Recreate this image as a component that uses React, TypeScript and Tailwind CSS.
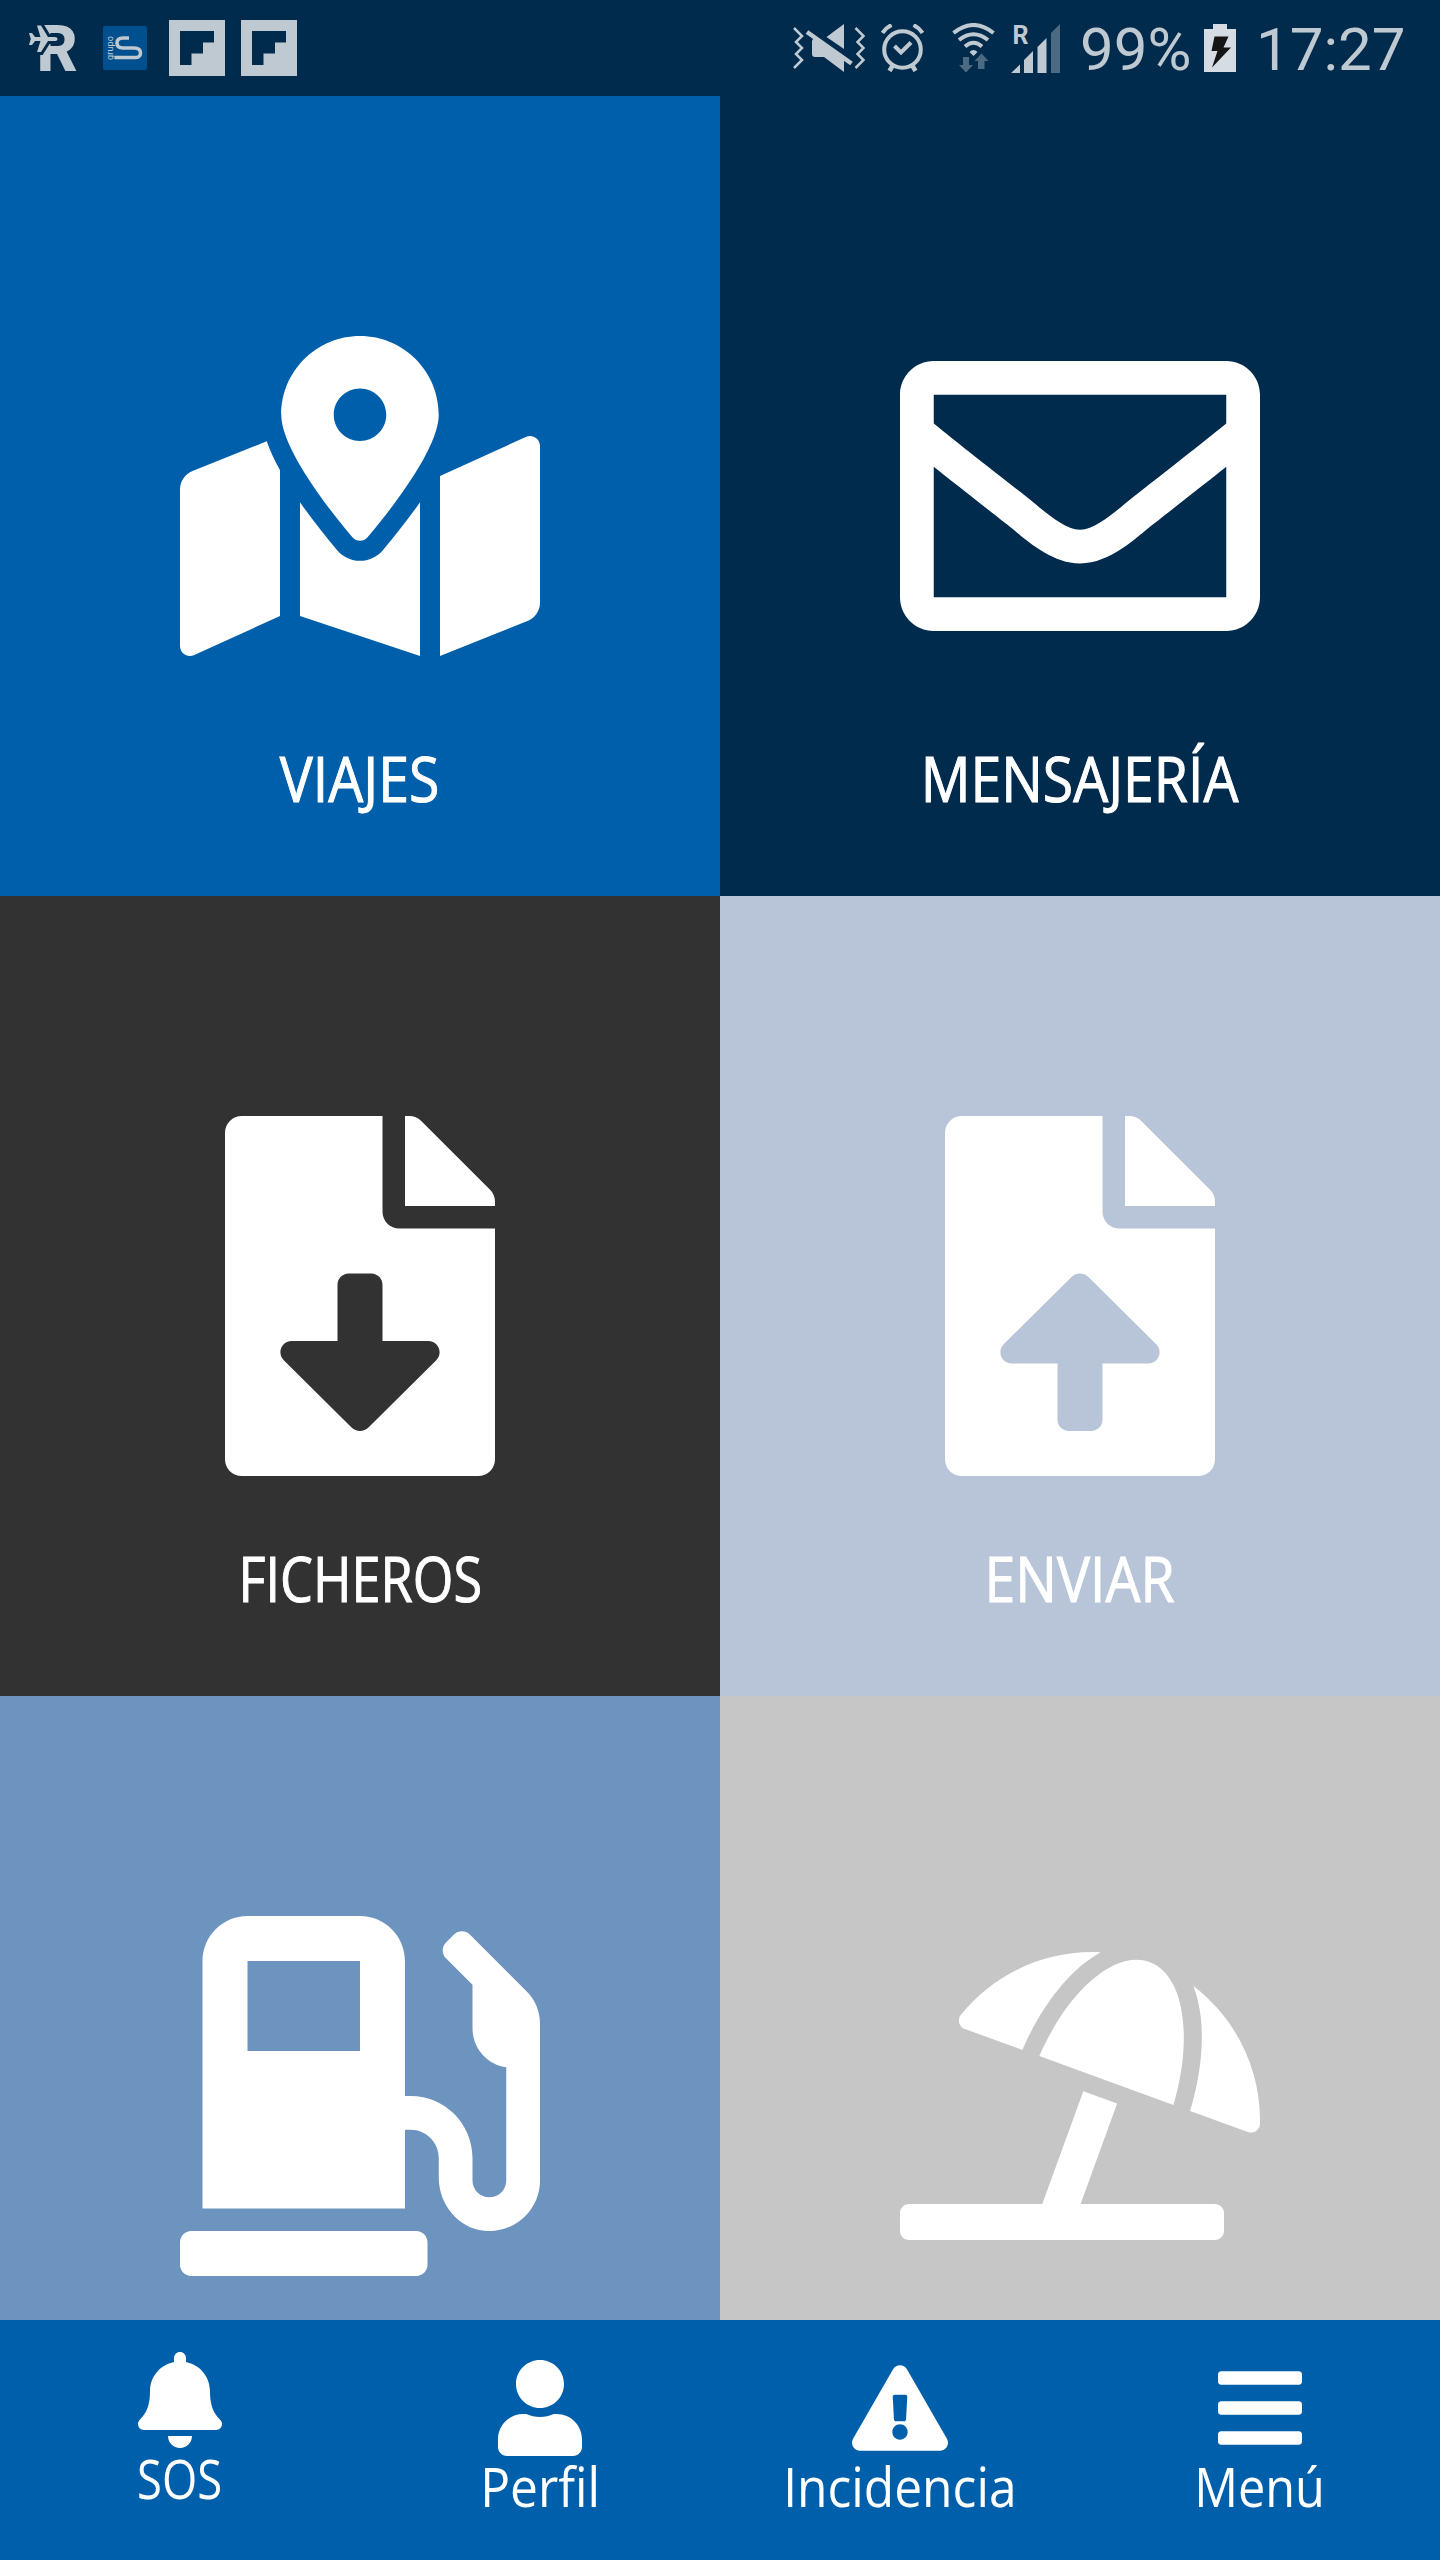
import React from 'react';
import type { IconType } from 'react-icons';
import {
  FaBars,
  FaBell,
  FaExclamationTriangle,
  FaFileDownload,
  FaFileUpload,
  FaGasPump,
  FaMapMarkedAlt,
  FaRegEnvelope,
  FaUmbrellaBeach,
  FaUser,
} from 'react-icons/fa';

interface Tile {
  label?: string;
  icon: IconType;
  bg: string;
  stretch?: string;
}

const tiles: Tile[] = [
  { label: 'VIAJES', icon: FaMapMarkedAlt, bg: 'bg-[#005fab]', stretch: 'scale-x-[0.9]' },
  { label: 'MENSAJERÍA', icon: FaRegEnvelope, bg: 'bg-[#002b4d]', stretch: 'scale-x-[0.9]' },
  { label: 'FICHEROS', icon: FaFileDownload, bg: 'bg-[#323232]', stretch: 'scale-x-[0.85]' },
  { label: 'ENVIAR', icon: FaFileUpload, bg: 'bg-[#b8c5d9]', stretch: 'scale-x-[0.9]' },
  { icon: FaGasPump, bg: 'bg-[#6d93bf]' },
  { icon: FaUmbrellaBeach, bg: 'bg-[#c6c6c6]' },
];

const navItems = [
  { label: 'SOS', icon: FaBell, pad: 'pt-8', stretch: 'scale-x-[0.84]' },
  { label: 'Perfil', icon: FaUser, pad: 'pt-10', stretch: 'scale-x-[0.92]' },
  { label: 'Incidencia', icon: FaExclamationTriangle, pad: 'pt-10', stretch: 'scale-x-[0.92]' },
  { label: 'Menú', icon: FaBars, pad: 'pt-10', stretch: 'scale-x-[0.9]' },
];

const PlaneLogo = () => (
  <svg viewBox="18 4 68 88" className="-mx-2.5 h-[88px] w-[68px]">
    <text x="36.5" y="71" fontSize="64" fontWeight="800" fontFamily="Roboto, sans-serif" fill="currentColor">R</text>
    <path
      d="M57.5 39q0-2-3-2h-6.5L41 25.500h-4L40.500 37H35l-3-4h-3l1.800 6-1.800 6h3l3-4h5.500L37 52h4l7-11h6.500q3 0 3-2z"
      fill="currentColor"
      stroke="#002b4d"
      strokeWidth="6"
      paintOrder="stroke"
    />
  </svg>
);

const GrupoLogo = () => (
  <svg viewBox="0 0 44 44" className="h-11 w-11">
    <rect width="44" height="44" rx="2" fill="#004f8f" />
    <path d="M26 12H20Q14 12 14 17T20 22H31Q37.500 22 37.500 27T31 31.500H12" fill="none" stroke="currentColor" strokeWidth="3.500" />
    <text transform="translate(9.500 34) rotate(-90)" fontSize="9" textLength="24" fontFamily="Roboto, sans-serif" fill="currentColor">grupo</text>
  </svg>
);

const FlipLogo = () => (
  <svg viewBox="0 0 56 56" className="h-14 w-14">
    <path d="M0 0H56V56H0zM11 11V45H22.500V33.500H34V22.500H45V11z" fill="currentColor" fillRule="evenodd" />
  </svg>
);

const MutedIcon = () => (
  <svg viewBox="793 24 72 48" className="h-12 w-[72px]" fill="none">
    <path d="M794 28l8 8-6 6 6 6-6 6 6 6-8 8M855.500 28l8 8-6 6 6 6-6 6 6 6-8 8" stroke="currentColor" strokeWidth="2.500" />
    <path d="M826.500 37L844 24V49zM814 37L844 58V72L824 57H815Q812 57 812 54V41z" fill="currentColor" />
    <path d="M807 32L851.500 63.500" stroke="currentColor" strokeWidth="4.500" />
  </svg>
);

const AlarmIcon = () => (
  <svg viewBox="881 24 43 48" className="h-12 w-[43px]" fill="none" stroke="currentColor">
    <circle cx="902.500" cy="49.500" r="18.300" strokeWidth="4" />
    <path d="M894.500 46l6.500 6.500L911 42.500" strokeWidth="4" />
    <path d="M882.500 33q3-5 9-8M922.500 33q-3-5-9-8" strokeWidth="4" />
    <path d="M893 65l-3.500 6M912 65l3.500 6" strokeWidth="4.500" />
  </svg>
);

const WifiIcon = () => (
  <svg viewBox="952 23 44 50" className="h-[50px] w-11" fill="none">
    <path d="M953.500 33Q973.500 17 993.500 33M959 40Q973.500 28.500 988 40M965 46.500Q973.500 39 982 46.500" stroke="currentColor" strokeWidth="4" />
    <path d="M969.500 52q4-4 8 0l-4 4z" fill="currentColor" />
    <path d="M963 57h6v8h4l-7 7.500-7-7.500h4zM978 69h6.500v-8h4l-7-7.500-7 7.500h3.500z" fill="#4d6a83" />
  </svg>
);

const SignalIcon = () => (
  <svg viewBox="1010 13 51 69" className="h-[69px] w-[51px]" fill="currentColor">
    <text x="1012.500" y="43" fontSize="25" fontWeight="700" fontFamily="Roboto, sans-serif">R</text>
    <path d="M1011 72l9-8.500V72zM1024 72V59l9-9v22zM1037.500 72V46l9-9v35z" />
    <path d="M1051 72V32l9-9v49z" fill="#4d6a83" />
  </svg>
);

const BatteryIcon = () => (
  <svg viewBox="1204 24 32 48" className="h-12 w-8">
    <path d="M1204 29h9v-5h14v5h9v43h-32z" fill="#d5dce3" />
    <path d="M1214.500 36.500h14l-5 11h7.500L1212 67.500l5.500-16.500h-6z" fill="#151515" />
  </svg>
);

const StatusBar = () => (
  <header className="flex h-24 items-center bg-[#002b4d] pl-7 pr-[35px] text-[#bfc9d1]">
    <PlaneLogo />
    <div className="ml-[27px]"><GrupoLogo /></div>
    <div className="ml-[22px] flex gap-4">
      <FlipLogo />
      <FlipLogo />
    </div>
    <div className="ml-auto flex items-center font-[Roboto,sans-serif] text-[60px] leading-[96px]">
      <MutedIcon />
      <div className="ml-4"><AlarmIcon /></div>
      <div className="ml-7"><WifiIcon /></div>
      <div className="ml-3.5"><SignalIcon /></div>
      <span className="ml-[19px] w-[113px] whitespace-nowrap pt-[3px]">99%</span>
      <div className="ml-[11px]"><BatteryIcon /></div>
      <span className="ml-5 w-[149px] whitespace-nowrap pt-[3px]">17:27</span>
    </div>
  </header>
);

export default function App() {
  return (
    <div className="flex h-[2560px] w-[1440px] flex-col overflow-hidden font-['Open_Sans','Noto_Sans',sans-serif] text-white">
      <StatusBar />

      <main className="grid grid-cols-2 grid-rows-[800px_800px_624px]">
        {tiles.map(({ label, icon: Icon, bg, stretch }, idx) => (
          <section key={idx} className={`flex flex-col items-center pt-[220px] ${bg}`}>
            <Icon className="h-[360px] w-[360px] shrink-0" />
            {label && (
              <span className={`mt-[62px] text-[61.5px] leading-[80px] [-webkit-text-stroke:1px_white] ${stretch}`}>{label}</span>
            )}
          </section>
        ))}
      </main>

      <nav className="grid h-60 grid-cols-4 bg-[#005fab]">
        {navItems.map(({ label, icon: Icon, pad, stretch }) => (
          <button key={label} className={`flex flex-col items-center ${pad}`}>
            <Icon className="h-24 w-24 shrink-0" />
            <span className={`text-[54px] leading-[60px] ${stretch}`}>{label}</span>
          </button>
        ))}
      </nav>
    </div>
  );
}
